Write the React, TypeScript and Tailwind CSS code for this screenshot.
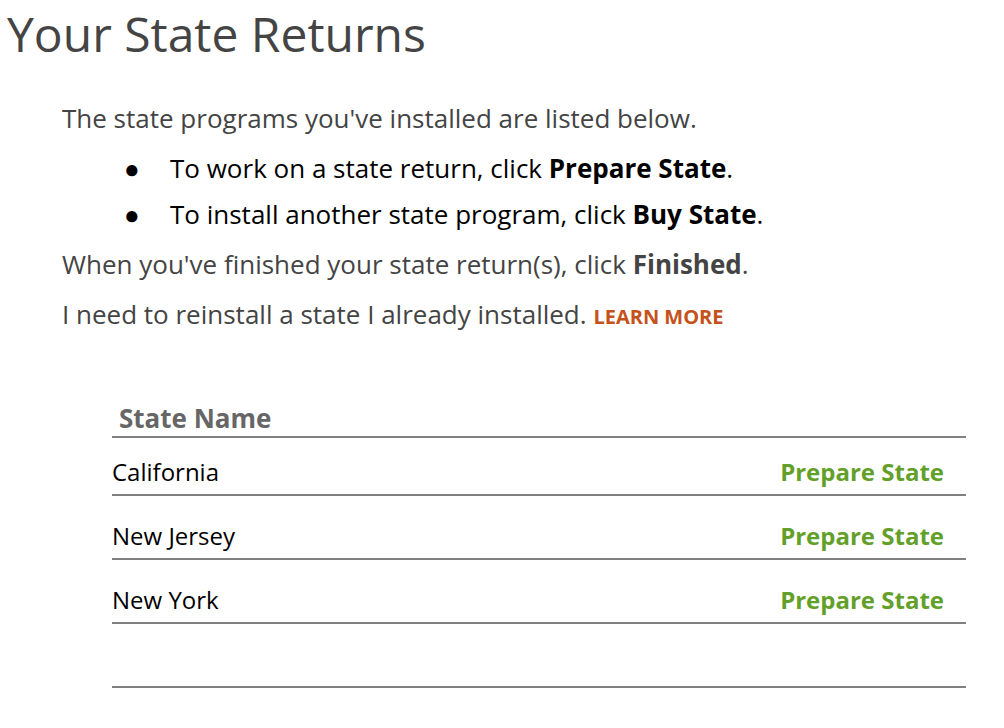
export default function App() {
  const states = ["California", "New Jersey", "New York"];

  return (
    <div className="min-h-screen bg-white font-['Open_Sans',sans-serif] text-[#444]">
      <h1 className="pl-[7px] pt-[2px] text-[48px] leading-[64px] text-[#444]">
        Your State Returns
      </h1>

      <div className="pl-[62px] pt-[27px] text-[26px] leading-[50px]">
        <p>The state programs you've installed are listed below.</p>
        <ul className="my-[2px] pl-[62px] text-black">
          <li className="flex items-center leading-[46px]">
            <span className="w-[46px] text-[26px]">●</span>
            <span>
              To work on a state return, click <b>Prepare State</b>.
            </span>
          </li>
          <li className="flex items-center leading-[46px]">
            <span className="w-[46px] text-[26px]">●</span>
            <span>
              To install another state program, click <b>Buy State</b>.
            </span>
          </li>
        </ul>
        <p>
          When you've finished your state return(s), click <b>Finished</b>.
        </p>
        <p>
          I need to reinstall a state I already installed.{" "}
          <a className="text-[20px] font-bold uppercase text-[#c4521a]">Learn More</a>
        </p>
      </div>

      <div className="ml-[112px] mr-[38px] mt-[58px]">
        <div className="border-b-2 border-[#808080] pl-[7px] text-[26px] font-bold leading-[36px] text-[#666]">
          State Name
        </div>
        {states.map((s, i) => (
          <div
            key={s}
            className={`flex items-end justify-between border-b-2 border-[#808080] pb-[4px] pr-[22px] text-[24px] leading-[36px] ${
              i === 0 ? "h-[58px]" : "h-[64px]"
            }`}
          >
            <span className="text-black">{s}</span>
            <a className="font-bold text-[#62a02a]">Prepare State</a>
          </div>
        ))}
        <div className="h-[64px] border-b-2 border-[#808080]" />
      </div>
    </div>
  );
}
